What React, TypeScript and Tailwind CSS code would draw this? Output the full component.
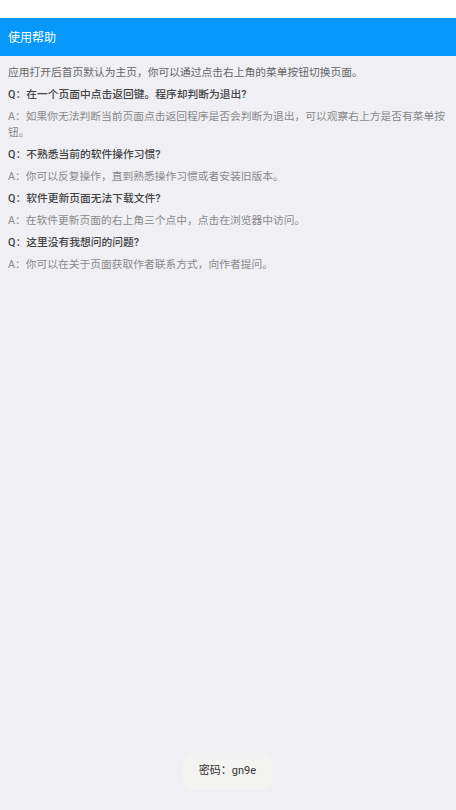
import React from "react";

const items: { q: string; a: string }[] = [
  { q: "在一个页面中点击返回键。程序却判断为退出?", a: "如果你无法判断当前页面点击返回程序是否会判断为退出，可以观察右上方是否有菜单按钮。" },
  { q: "不熟悉当前的软件操作习惯?", a: "你可以反复操作，直到熟悉操作习惯或者安装旧版本。" },
  { q: "软件更新页面无法下载文件?", a: "在软件更新页面的右上角三个点中，点击在浏览器中访问。" },
  { q: "这里没有我想问的问题?", a: "你可以在关于页面获取作者联系方式，向作者提问。" },
];

export default function App() {
  return (
    <div
      className="relative w-[456px] h-[810px] bg-[#efeff4] flex flex-col overflow-hidden"
      style={{ fontFamily: 'Roboto, "Noto Sans CJK SC", "Noto Sans", sans-serif' }}
    >
      <div className="h-[18px] bg-white" />
      <div className="h-[38px] bg-[#0798fb] flex items-center px-2 pt-[1px]">
        <span className="text-white text-[12px]">使用帮助</span>
      </div>
      <div className="flex flex-col gap-[6px] px-2 pt-[9px] text-[10.75px] leading-[16px]">
        <p className="text-[#666]">应用打开后首页默认为主页，你可以通过点击右上角的菜单按钮切换页面。</p>
        {items.map((it) => (
          <React.Fragment key={it.q}>
            <p className="text-[#444] font-medium">Q：{it.q}</p>
            <p className="text-[#8a8a8a]">A：{it.a}</p>
          </React.Fragment>
        ))}
      </div>
      <div className="absolute left-[183px] top-[753px] w-[89px] h-[37px] rounded-[9px] bg-[#f3f3f1] flex items-center justify-center">
        <span className="text-[11px] text-[#333]">密码：gn9e</span>
      </div>
    </div>
  );
}
